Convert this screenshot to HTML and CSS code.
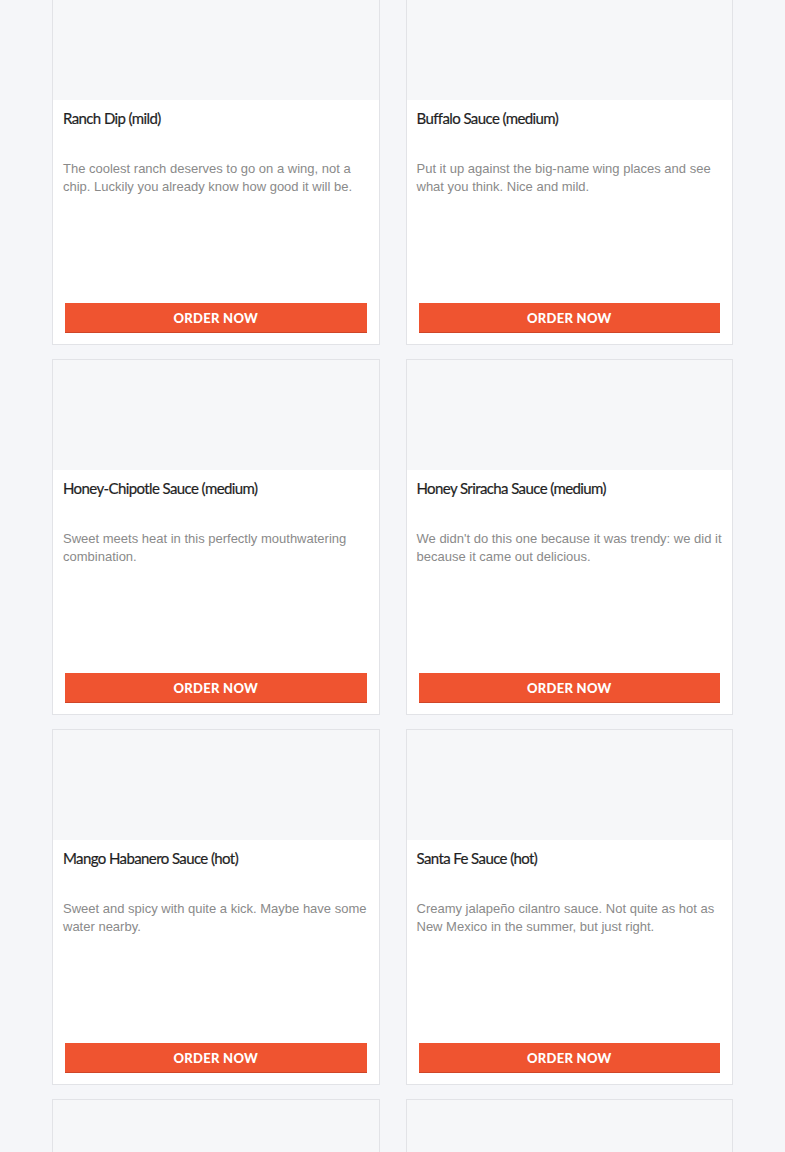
FILE: index.html
```html
<!DOCTYPE html>
<html lang="en">
<head>
<meta charset="utf-8">
<title>Sauces</title>
<link rel="stylesheet" href="styles.css">
</head>
<body>
<div class="grid">
  <div class="card">
    <div class="card-img"></div>
    <div class="card-body">
      <h3 class="card-title">Ranch Dip (mild)</h3>
      <p class="card-desc">The coolest ranch deserves to go on a wing, not a chip. Luckily you already know how good it will be.</p>
    </div>
    <a class="btn" href="#">Order Now</a>
  </div>
  <div class="card">
    <div class="card-img"></div>
    <div class="card-body">
      <h3 class="card-title">Buffalo Sauce (medium)</h3>
      <p class="card-desc">Put it up against the big-name wing places and see what you think. Nice and mild.</p>
    </div>
    <a class="btn" href="#">Order Now</a>
  </div>
  <div class="card">
    <div class="card-img"></div>
    <div class="card-body">
      <h3 class="card-title">Honey-Chipotle Sauce (medium)</h3>
      <p class="card-desc">Sweet meets heat in this perfectly mouthwatering combination.</p>
    </div>
    <a class="btn" href="#">Order Now</a>
  </div>
  <div class="card">
    <div class="card-img"></div>
    <div class="card-body">
      <h3 class="card-title">Honey Sriracha Sauce (medium)</h3>
      <p class="card-desc">We didn't do this one because it was trendy: we did it because it came out delicious.</p>
    </div>
    <a class="btn" href="#">Order Now</a>
  </div>
  <div class="card">
    <div class="card-img"></div>
    <div class="card-body">
      <h3 class="card-title">Mango Habanero Sauce (hot)</h3>
      <p class="card-desc">Sweet and spicy with quite a kick. Maybe have some water nearby.</p>
    </div>
    <a class="btn" href="#">Order Now</a>
  </div>
  <div class="card">
    <div class="card-img"></div>
    <div class="card-body">
      <h3 class="card-title">Santa Fe Sauce (hot)</h3>
      <p class="card-desc">Creamy jalapeño cilantro sauce. Not quite as hot as New Mexico in the summer, but just right.</p>
    </div>
    <a class="btn" href="#">Order Now</a>
  </div>
  <div class="card card-partial">
    <div class="card-img"></div>
  </div>
  <div class="card card-partial">
    <div class="card-img"></div>
  </div>
</div>
</body>
</html>
```
FILE: styles.css
```css
html, body {
  margin: 0;
  padding: 0;
  background: #f5f6f9;
}
body {
  font-family: "Liberation Sans", Arial, sans-serif;
}
.grid {
  width: 681px;
  margin: -11px auto 0;
  display: grid;
  grid-template-columns: 1fr 1fr;
  column-gap: 26px;
  row-gap: 14px;
}
.card {
  box-sizing: border-box;
  height: 356px;
  background: #ffffff;
  border: 1px solid #e2e3e7;
  display: flex;
  flex-direction: column;
}
.card-partial {
  height: 60px;
  border-bottom: none;
  background: #f6f7f9;
}
.card-img {
  height: 110px;
  background: #f6f7f9;
  flex: none;
}
.card-body {
  padding: 0 10px;
  flex: 1;
}
.card-title {
  margin: 0;
  padding-top: 8px;
  font-family: Lato, "Liberation Sans", sans-serif;
  font-weight: 400;
  font-size: 15px;
  line-height: 20px;
  letter-spacing: -0.6px;
  color: #1f1f1f;
  -webkit-text-stroke: 0.2px #1f1f1f;
}
.card-desc {
  margin: 32px 0 0;
  font-size: 13px;
  line-height: 18px;
  color: #8a8a8a;
}
.btn {
  display: block;
  box-sizing: border-box;
  height: 30px;
  margin: 0 12px 11px;
  background: #ef5430;
  border-bottom: 1px solid #cf4528;
  color: #ffffff;
  text-align: center;
  text-decoration: none;
  text-transform: uppercase;
  font-family: Lato, "Liberation Sans", sans-serif;
  font-weight: 900;
  font-size: 13px;
  line-height: 30px;
  letter-spacing: 0.3px;
}
```
